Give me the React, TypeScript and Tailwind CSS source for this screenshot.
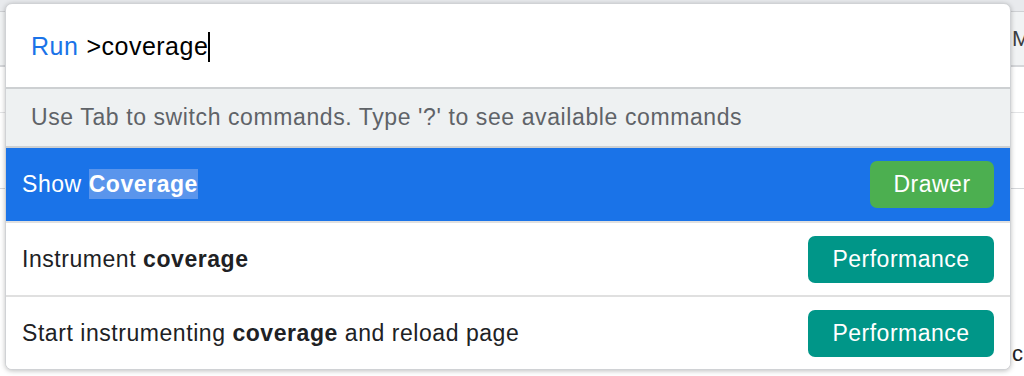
export default function App() {
  const rows = [
    { pre: "Show ", bold: "Coverage", post: "", badge: "Drawer", selected: true },
    { pre: "Instrument ", bold: "coverage", post: "", badge: "Performance", selected: false },
    { pre: "Start instrumenting ", bold: "coverage", post: " and reload page", badge: "Performance", selected: false },
  ];

  return (
    <div
      className="relative w-[1024px] h-[376px] overflow-hidden bg-white"
      style={{ fontFamily: '"Liberation Sans", Arial, sans-serif' }}
    >
      {/* page behind the dialog */}
      <div className="flex flex-col h-full">
        <div className="h-[12px] bg-[#e8eaed] border-b border-[#cfd1d4]" />
        <div className="h-[55px] bg-[#f1f3f4] border-b-2 border-[#d5d7da] flex items-center justify-end overflow-hidden">
          <span className="text-[22px] text-[#3c4043] w-[12px] overflow-hidden">M</span>
        </div>
        <div className="h-[46px] border-b border-[#e3e4e6]" />
        <div className="h-[76px] border-b border-[#d5d7da]" />
        <div className="flex-1 flex justify-end items-end pb-[6px] overflow-hidden">
          <span className="text-[22px] text-[#202124] w-[12px] overflow-hidden">c</span>
        </div>
      </div>

      {/* command menu */}
      <div className="absolute left-[5px] top-[3px] w-[1006px] rounded-[7px] bg-white border border-[#d0d2d5] shadow-[0_1px_5px_rgba(0,0,0,0.25)] overflow-hidden flex flex-col">
        <div className="h-[83px] flex items-center pl-[25px] text-[25px] tracking-[0.5px] pt-[2px]">
          <span className="text-[#1a73e8]">Run</span>
          <span className="ml-[8px] text-black">&gt;coverage</span>
          <span className="w-[2px] h-[30px] bg-black" />
        </div>
        <div className="h-[61px] bg-[#eef1f2] border-t-2 border-b-2 border-[#cdd0d2] flex items-center pl-[25px] text-[23px] tracking-[0.6px] text-[#5f6368]">
          Use Tab to switch commands. Type '?' to see available commands
        </div>
        {rows.map((r, i) => (
          <div
            key={i}
            className={
              r.selected
                ? "h-[73px] bg-[#1a73e8] text-white flex items-center justify-between pl-[16px] pr-[16px]"
                : "h-[74px] bg-white text-[#202124] border-t-2 border-[#e0e0e0] flex items-center justify-between pl-[16px] pr-[16px]"
            }
          >
            <div className="text-[23px] tracking-[0.55px]">
              {r.pre}
              <b className={r.selected ? "bg-[#5a95ec] font-bold py-[2px]" : "font-bold"}>{r.bold}</b>
              {r.post}
            </div>
            <div
              className={
                r.selected
                  ? "h-[47px] w-[124px] justify-center rounded-[7px] bg-[#4caf50] text-white text-[23px] tracking-[0.5px] flex items-center"
                  : "h-[47px] w-[186px] justify-center rounded-[7px] bg-[#009688] text-white text-[23px] tracking-[0.5px] flex items-center"
              }
            >
              {r.badge}
            </div>
          </div>
        ))}
      </div>
    </div>
  );
}
